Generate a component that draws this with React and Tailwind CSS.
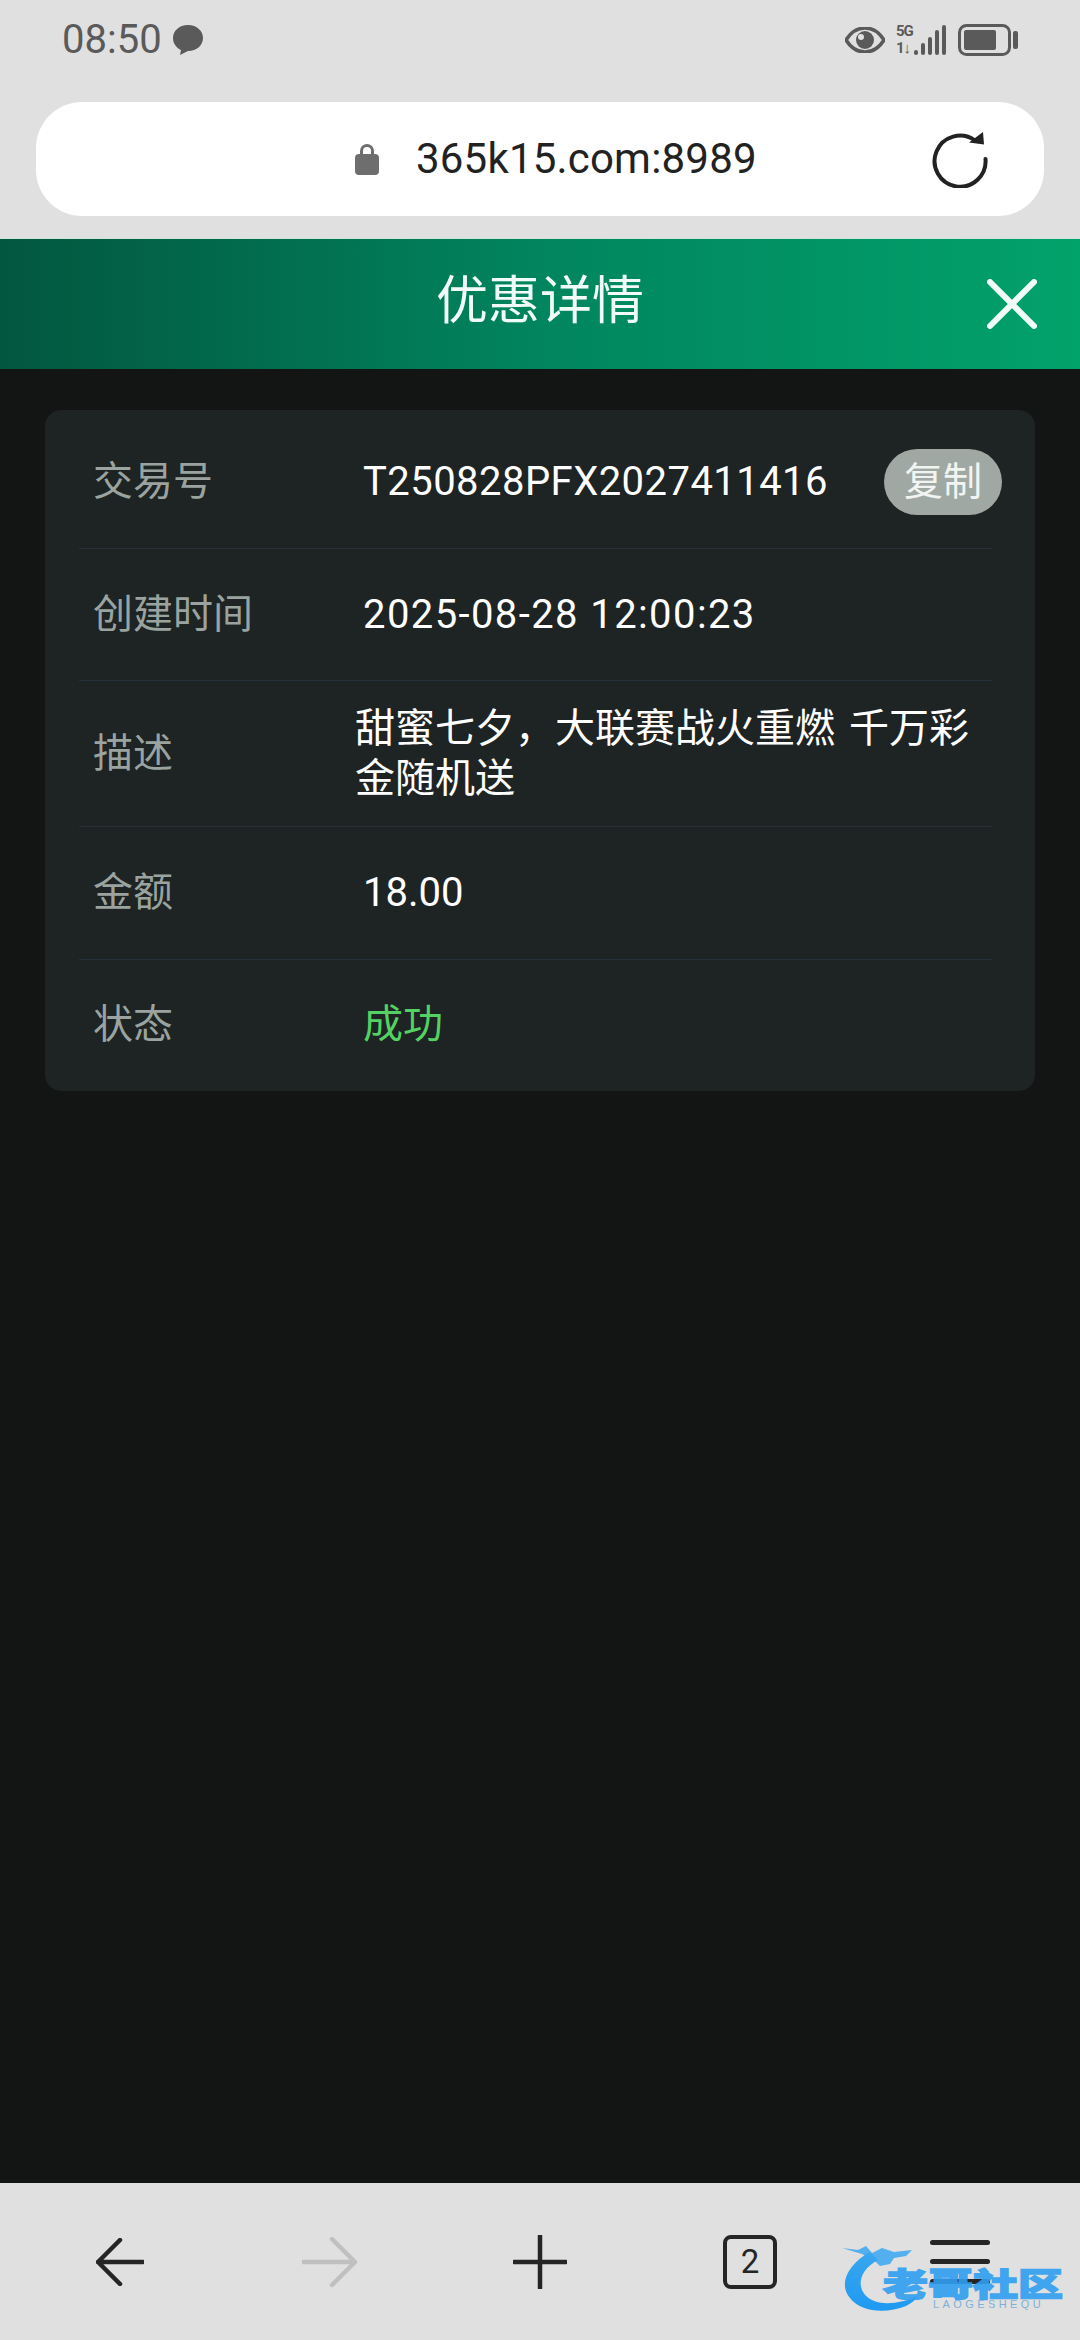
const cjk = "font-['Roboto','Noto_Sans_CJK_SC',sans-serif]";

function StatusBar() {
  return (
    <div className="h-[102px] flex items-center pl-[62px] pr-[62px] pb-[22px] text-[#5a5a5a]">
      <span className="text-[40px] leading-none">08:50</span>
      <svg width="34" height="32" viewBox="0 0 34 32" className="ml-[9px]">
        <path d="M17 1C8 1 2 7 2 14c0 6 4 10 8 12l-1 5 8-4c9 0 15-6 15-13S26 1 17 1z" fill="#5a5a5a" />
      </svg>
      <div className="ml-auto flex items-center">
        <svg width="40" height="26" viewBox="0 0 40 26">
          <path d="M1 13C6 5 12 1 20 1s14 4 19 12c-5 8-11 12-19 12S6 21 1 13z" fill="none" stroke="#5a5a5a" strokeWidth="3.5" />
          <circle cx="20" cy="13" r="9" fill="#5a5a5a" />
          <circle cx="16" cy="10" r="3" fill="#e0e0e0" />
        </svg>
        <div className="ml-[11px] w-[17px] h-[32px] flex flex-col justify-between font-['Roboto',sans-serif] font-bold text-[15px] leading-[15px] tracking-[-1px]">
          <span>5G</span>
          <span>1↓</span>
        </div>
        <svg width="32" height="31" viewBox="0 0 32 31" className="ml-[1px]">
          <rect x="0" y="25" width="4" height="5" rx="2" fill="#5a5a5a" />
          <rect x="7" y="18" width="4" height="12" rx="2" fill="#5a5a5a" />
          <rect x="14" y="12" width="4" height="18" rx="2" fill="#5a5a5a" />
          <rect x="21" y="5" width="4" height="25" rx="2" fill="#5a5a5a" />
          <rect x="28" y="0" width="4" height="30" rx="2" fill="#5a5a5a" />
        </svg>
        <svg width="60" height="32" viewBox="0 0 60 32" className="ml-[12px]">
          <rect x="1.5" y="1.5" width="50" height="29" rx="7" fill="none" stroke="#5a5a5a" strokeWidth="3" />
          <rect x="6" y="6" width="32" height="20" rx="2" fill="#5a5a5a" />
          <rect x="55" y="7" width="5" height="18" rx="2" fill="#5a5a5a" />
        </svg>
      </div>
    </div>
  );
}

function UrlBar() {
  return (
    <div className="mx-[36px] h-[114px] rounded-[46px] bg-white flex items-center relative">
      <svg width="24" height="32" viewBox="0 0 24 32" className="ml-[319px]">
        <path d="M6.5 12V8a5.5 5.5 0 0 1 11 0v4" fill="none" stroke="#6e6e6e" strokeWidth="3" />
        <rect x="0" y="11" width="24" height="21" rx="4" fill="#6e6e6e" />
      </svg>
      <span className={`ml-[37px] text-[42px] leading-none tracking-[0.2px] text-[#222] ${cjk}`}>365k15.com:8989</span>
      <svg width="58" height="58" viewBox="0 0 58 58" className="ml-auto mr-[55px]">
        <path d="M44 10.5A25.5 25.5 0 1 0 54.5 29" fill="none" stroke="#222" strokeWidth="4" strokeLinecap="round" />
        <path d="M38 12.5L53 14.5L52 2z" fill="#222" />
      </svg>
    </div>
  );
}

function Header() {
  return (
    <div className="h-[131px] shrink-0 relative flex items-center justify-center bg-gradient-to-r from-[#02573f] via-[#01855e] to-[#02a26b] border-t border-[#cfe5dc]">
      <span className={`text-[52px] leading-none text-[#f1fbf7] ${cjk} pb-[5px]`}>优惠详情</span>
      <svg width="50" height="50" viewBox="0 0 50 50" className="absolute right-[43px] top-[40px]">
        <path d="M3 3L47 47M47 3L3 47" stroke="#f1fbf7" strokeWidth="6" strokeLinecap="round" />
      </svg>
    </div>
  );
}

function Row({ label, h, last, children }) {
  return (
    <div className={`${h} pl-[14px] flex items-center ${last ? "" : "border-b border-[#253137]"}`}>
      <span className="w-[270px] shrink-0 text-[40px] leading-none text-[#9aa39f]">{label}</span>
      {children}
    </div>
  );
}

function Card() {
  return (
    <div className={`mx-[45px] mt-[41px] h-[681px] rounded-[16px] bg-[#1e2324] pl-[34px] pr-[43px] pt-[6px] ${cjk}`}>
      <Row label="交易号" h="h-[133px]">
        <span className="text-[40px] leading-none text-white tracking-[0.45px]">T250828PFX2027411416</span>
        <button className="ml-auto -mr-[10px] w-[118px] h-[66px] rounded-[33px] bg-[#a0a8a3] text-[39px] leading-none text-[#f2f4f2]">复制</button>
      </Row>
      <Row label="创建时间" h="h-[132px]">
        <span className="text-[40px] leading-none tracking-[1.4px] text-white">2025-08-28 12:00:23</span>
      </Row>
      <Row label="描述" h="h-[146px]">
        <span className="-ml-[8px] text-[40px] leading-[50px] [word-spacing:4px] text-white">甜蜜七夕，大联赛战火重燃 千万彩金随机送</span>
      </Row>
      <Row label="金额" h="h-[133px]">
        <span className="text-[40px] leading-none text-white">18.00</span>
      </Row>
      <Row label="状态" h="h-[129px]" last>
        <span className="text-[40px] leading-none text-[#54d163]">成功</span>
      </Row>
    </div>
  );
}

function Logo() {
  return (
    <div className="absolute left-[842px] top-[2240px] w-[225px] h-[75px] pointer-events-none">
      <svg width="110" height="75" viewBox="0 0 110 75" className="absolute left-0 top-0">
        <defs>
          <linearGradient id="d" x1="0" y1="0" x2="0" y2="1">
            <stop offset="0" stopColor="#3aa6ee" />
            <stop offset="1" stopColor="#1e9af2" />
          </linearGradient>
        </defs>
        <path d="M28 12C6 24 -4 44 8 58c10 14 36 16 56 8 6-3 9-6 12-10-16 7-34 10-46 4C14 52 14 32 36 20z" fill="url(#d)" />
        <path d="M0 8L16 10L24 6L30 13L40 8L52 12L70 10L64 16L52 18L48 24L38 26L32 20L20 14Z" fill="#3aa6ee" opacity="0.85" />
      </svg>
      <span className="absolute left-[40px] top-[27px] w-[182px] h-[30px] text-center text-[45px] leading-[30px] font-black scale-y-[0.72] text-[#2f9ff0] [-webkit-text-stroke:2px_#2f9ff0] opacity-90 font-['Noto_Sans_CJK_SC',sans-serif] whitespace-nowrap">老哥社区</span>
      <span className="absolute left-[91px] top-[59px] text-[11px] leading-none tracking-[3.4px] text-[#7fb0d8] font-['Liberation_Sans',sans-serif] whitespace-nowrap">LAOGESHEQU</span>
    </div>
  );
}

function BottomBar() {
  const s = "#252525";
  return (
    <div className="mt-auto h-[157px] bg-[#e0e0e0] grid grid-cols-5 px-[15px] items-center justify-items-center">
      <svg width="48" height="48" viewBox="0 0 48 48">
        <path d="M47 24H2M24 2L2 24L24 46" fill="none" stroke={s} strokeWidth="4.5" strokeLinecap="round" strokeLinejoin="round" />
      </svg>
      <svg width="56" height="50" viewBox="0 0 56 50">
        <path d="M1 25H53M30 2L53 25L30 48" fill="none" stroke="#c0c0c0" strokeWidth="4.5" strokeLinecap="round" strokeLinejoin="round" />
      </svg>
      <svg width="54" height="54" viewBox="0 0 54 54">
        <path d="M27 1V53M1 27H53" fill="none" stroke={s} strokeWidth="4.5" strokeLinecap="round" />
      </svg>
      <div className="w-[54px] h-[54px] rounded-[8px] border-[4px] border-[#252525] flex items-center justify-center text-[33px] leading-none text-[#252525] font-['Roboto',sans-serif]">2</div>
      <div className="w-[60px] h-[44px] flex flex-col justify-between">
        <div className="h-[5px] rounded-full bg-[#252525]" />
        <div className="h-[5px] rounded-full bg-[#252525]" />
        <div className="h-[5px] rounded-full bg-[#252525]" />
      </div>
    </div>
  );
}

export default function App() {
  return (
    <div className={`relative w-[1080px] h-[2340px] flex flex-col bg-[#131514] overflow-hidden ${cjk}`}>
      <div className="bg-[#e0e0e0] h-[238px] flex flex-col shrink-0">
        <StatusBar />
        <UrlBar />
      </div>
      <Header />
      <Card />
      <BottomBar />
      <Logo />
    </div>
  );
}
